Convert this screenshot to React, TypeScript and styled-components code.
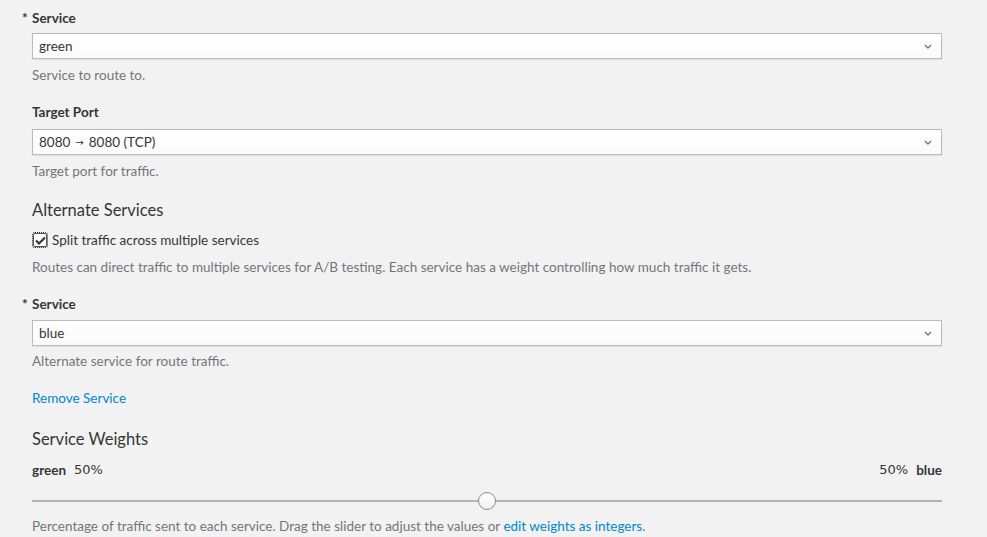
import React from "react";
import styled, { createGlobalStyle } from "styled-components";

const Global = createGlobalStyle`
  html, body { margin: 0; padding: 0; background: #f2f2f2; }
  body { font-family: Lato, "Open Sans", sans-serif; font-size: 13.5px; color: #363636; }
  * { box-sizing: border-box; }
`;

const Page = styled.div`
  width: 987px;
  height: 537px;
  overflow: hidden;
  padding: 9px 45px 0 32px;
  display: flex;
  flex-direction: column;
`;

const Group = styled.div<{ $mb?: number }>`
  display: flex;
  flex-direction: column;
  margin-bottom: ${(p) => p.$mb ?? 19}px;
`;

const Label = styled.label<{ $required?: boolean; $gap?: number }>`
  position: relative;
  font-weight: 700;
  font-size: 13.5px;
  line-height: 18px;
  color: #363636;
  margin-bottom: ${(p) => p.$gap ?? 6}px;
  ${(p) =>
    p.$required &&
    `&::before { content: "*"; position: absolute; left: -10px; top: 0; font-weight: 700; }`}
`;

const SelectBox = styled.div`
  position: relative;
  height: 26px;
  border: 1px solid #bbb;
  background: linear-gradient(#fff, #fafafa);
  box-shadow: 0 1px 1px rgba(3, 3, 3, 0.08);
  display: flex;
  align-items: center;
  padding: 0 6px;
  font-size: 13.5px;
  color: #363636;
`;

const Chevron = styled.svg`
  position: absolute;
  right: 9px;
  top: 10px;
`;

const Arrow = styled.span`
  font-family: "DejaVu Sans", sans-serif;
  font-size: 10px;
  margin: 0 5px;
`;

const Help = styled.div<{ $mt?: number }>`
  margin-top: ${(p) => p.$mt ?? 7}px;
  line-height: 18px;
  color: #72767b;
  font-size: 13.5px;
`;

const Heading = styled.h3`
  margin: 0 0 10px;
  font-size: 16.5px;
  font-weight: 400;
  line-height: 22px;
  color: #363636;
`;

const CheckRow = styled.label`
  display: flex;
  align-items: center;
  gap: 5px;
  line-height: 18px;
  font-size: 13.5px;
  color: #363636;
`;

const Box = styled.span`
  width: 14px;
  height: 14px;
  margin-left: 1px;
  border: 1px solid #555;
  border-radius: 2px;
  background: #fff;
  outline: 1px dotted #222;
  outline-offset: 0px;
  display: flex;
  align-items: center;
  justify-content: center;
`;

const Link = styled.a`
  color: #0088ce;
  text-decoration: none;
  cursor: pointer;
`;

const WeightRow = styled.div`
  display: flex;
  justify-content: space-between;
  align-items: center;
  line-height: 18px;
  margin-top: 1px;
`;

const Side = styled.div`
  display: flex;
  align-items: center;
  gap: 8px;
`;

const Name = styled.span`
  font-weight: 700;
  font-size: 13.5px;
  color: #363636;
`;

const Pct = styled.span`
  font-family: "DejaVu Sans", sans-serif;
  font-size: 13px;
  color: #363636;
`;

const Slider = styled.div`
  position: relative;
  height: 20px;
  margin-top: 12px;
  display: flex;
  align-items: center;
`;

const Track = styled.div`
  flex: 1;
  height: 2px;
  background: #b3b3b3;
`;

const Thumb = styled.div`
  position: absolute;
  left: 50%;
  top: 1px;
  width: 18px;
  height: 18px;
  margin-left: -9px;
  border-radius: 50%;
  border: 1px solid #8b8d8f;
  background: linear-gradient(#fff, #f0f0f0);
`;

const ChevronIcon = () => (
  <Chevron width="8" height="5" viewBox="0 0 8 5">
    <path d="M1 1 L4 4 L7 1" fill="none" stroke="#777" strokeWidth="1.4" />
  </Chevron>
);

const Select = ({ children }: { children: React.ReactNode }) => (
  <SelectBox>
    {children}
    <ChevronIcon />
  </SelectBox>
);

export default function App() {
  return (
    <>
      <Global />
      <Page>
        <Group>
          <Label $required>Service</Label>
          <Select>green</Select>
          <Help>Service to route to.</Help>
        </Group>
        <Group $mb={19}>
          <Label $gap={8}>Target Port</Label>
          <Select>
            8080<Arrow>→</Arrow>8080 (TCP)
          </Select>
          <Help>Target port for traffic.</Help>
        </Group>
        <Heading>Alternate Services</Heading>
        <CheckRow>
          <Box>
            <svg width="11" height="9" viewBox="0 0 11 9">
              <path d="M1 4.5 L4 7.5 L10 1.5" fill="none" stroke="#363636" strokeWidth="2.2" />
            </svg>
          </Box>
          Split traffic across multiple services
        </CheckRow>
        <Group $mb={19}>
          <Help $mt={9}>
            Routes can direct traffic to multiple services for A/B testing. Each service has a weight
            controlling how much traffic it gets.
          </Help>
        </Group>
        <Group $mb={20}>
          <Label $required $gap={7}>Service</Label>
          <Select>blue</Select>
          <Help $mt={6}>Alternate service for route traffic.</Help>
        </Group>
        <Group $mb={22}>
          <Link>Remove Service</Link>
        </Group>
        <Heading>Service Weights</Heading>
        <WeightRow>
          <Side>
            <Name>green</Name>
            <Pct>50%</Pct>
          </Side>
          <Side>
            <Pct>50%</Pct>
            <Name>blue</Name>
          </Side>
        </WeightRow>
        <Slider>
          <Track />
          <Thumb />
        </Slider>
        <Help $mt={6}>
          Percentage of traffic sent to each service. Drag the slider to adjust the values or{" "}
          <Link>edit weights as integers</Link>.
        </Help>
      </Page>
    </>
  );
}
